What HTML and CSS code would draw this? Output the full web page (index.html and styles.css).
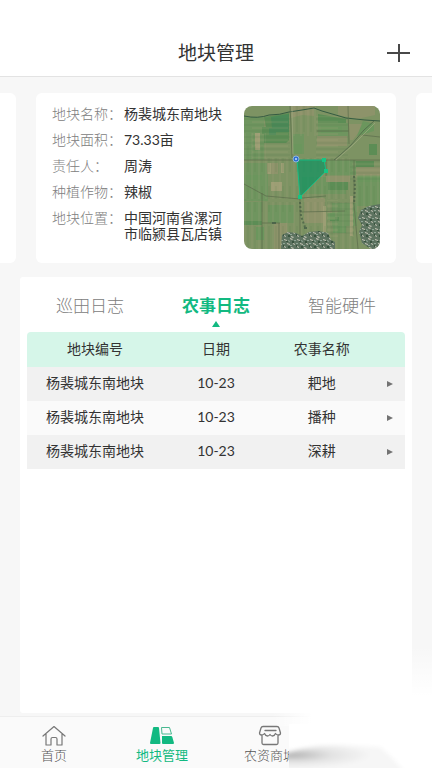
FILE: index.html
```html
<!DOCTYPE html>
<html lang="zh-CN">
<head>
<meta charset="utf-8">
<meta name="viewport" content="width=device-width, initial-scale=1">
<title>地块管理</title>
<link rel="stylesheet" href="styles.css">
</head>
<body>
<header class="topbar">
  <h1 class="topbar-title">地块管理</h1>
  <button class="add" type="button" aria-label="添加">
    <svg width="24" height="20" viewBox="0 0 24 20"><path d="M0 10H23M12 1V19" stroke="#484848" stroke-width="2" fill="none"/></svg>
  </button>
</header>
<main class="content">
  <section class="carousel">
    <div class="card peek"></div>
    <article class="card plot">
      <dl class="facts">
        <dt>地块名称：</dt><dd>杨裴城东南地块</dd>
        <dt>地块面积：</dt><dd>73.33亩</dd>
        <dt>责任人：</dt><dd>周涛</dd>
        <dt>种植作物：</dt><dd>辣椒</dd>
        <dt>地块位置：</dt><dd class="address">中国河南省漯河市临颍县瓦店镇</dd>
      </dl>
      <svg class="map" width="136" height="143" viewBox="0 0 136 143">
        <defs>
          <pattern id="furrow" width="7" height="40" patternUnits="userSpaceOnUse">
            <path d="M1 0V40" stroke="#b3a483" stroke-width="1" opacity=".22"/>
            <path d="M4 0V26" stroke="#4c7146" stroke-width="1" opacity=".2"/>
          </pattern>
          <pattern id="furrow-h" width="50" height="6" patternUnits="userSpaceOnUse">
            <path d="M0 1H50" stroke="#3f6e42" stroke-width="1" opacity=".2"/>
            <path d="M8 4H44" stroke="#b1a37e" stroke-width="1" opacity=".25"/>
          </pattern>
          <pattern id="village" width="13" height="11" patternUnits="userSpaceOnUse">
            <path fill="#5d7360" d="M0 0H13V11H0z"/>
            <path fill="#c5c4b5" d="M1 1l3 1v1l-3-1zM7 0l3 1-1 1-2-1zM4 5l3 1v1l-3-1zM10 5l2 1v1l-2-1zM1 8l2 1v1l-2-1zM8 9l3 1-1 1-2-1z"/>
            <path fill="#8fa596" d="M5 2l2 1v1l-2-1zM0 5h2v1H0zM7 7h2v1H7zM11 2h2v1h-2z"/>
            <path fill="#39543f" d="M3 3h2v1H3zM9 3h2v2H9zM5 8h2v2H5zM0 7h1v2H0z"/>
          </pattern>
        </defs>
        <path fill="#7d9363" d="M0 0H136V143H0z"/>
        <path fill="#6f955f" d="M0 11H20V54H0zM49 28H60V48H49zM74 17H104V30H74zM82 54H112V69H82zM0 57H24V95H0zM24 99H50V117H24zM0 96H18V117H0zM58 71H102V88H58zM112 75H136V100H112zM88 97H113V120H88z"/>
        <path fill="#5c8d55" d="M20 11L45 7V34L42 37H20V28H18V21H22zM74 8L102 13V17H74zM112 55H130V62H112zM84 75H104V84H84zM86 111H95V115H86zM0 115H18V119H0zM125 38H133V49H125z"/>
        <path fill="#4b8957" d="M27 11L45 8V26H32V29H25V22H28z"/>
        <path fill="#8d936a" d="M46 0H70V10L58 9L47 12zM105 18H121L109 34H106zM23 57H34V68H23zM27 76H38V84H27zM60 92H81V117H60zM82 70H106V76H82zM112 61H136V69H112zM30 117H43V143H30zM73 30H103V40H73zM94 0H131V9L113 13L94 9z"/>
        <path fill="#6b965d" d="M49 38H58V48H49zM77 20H98V27H77zM0 69H18V74H0zM84 107H91V114H84zM89 120H102V127H89zM119 15L130 18V25L113 30zM12 121H20V134H12zM113 70H136V76H113z"/>
        <path fill="#9c9e74" d="M27 76H38V85H27zM24 57H27V68H24zM37 57H40V67H37zM11 27H16V44H11zM79 100H82V129H79zM106 90H109V130H106z"/>
        <path fill="url(#furrow)" d="M0 52H106V93H0zM0 96H112V143H0zM46 0H72V30H46zM112 68H136V106H112zM0 27H22V52H0z"/>
        <path fill="url(#furrow-h)" d="M0 11H46V52H0zM72 10H104V52H72zM83 94H110V132H83zM106 54H136V75H106z"/>
        <g fill="none" stroke="#5b6c4b" stroke-opacity=".7">
          <path stroke="#355b42" stroke-opacity="1" d="M0 10Q14 13 25 9Q36 9 45 6L58 4L70 2L78 5L102 12L121 14L136 15"/>
          <path d="M46 0L47 20L48 52M0 54H136M0 78L22 90L56 93M104 0L105 38M56 93V143M18 87V143M110 54L110 98L114 143M58 92L82 90M18 117H36M35 117V143M56 106L101 105M73 25H105M82 54V70M118 29L136 31"/>
          <path stroke="#485e45" d="M130 15L120 24L107 39L96 49L90 54"/>
          <path stroke="#a0aa82" d="M48 0L49 48M131 17L108 40L92 54"/>
          <path stroke="#455b43" stroke-dasharray="2 2" stroke-width="2" d="M56 96L57 110L61 121M110 70L111 80L110 98"/>
          <path stroke="#3d5743" stroke-width="2" d="M28 117H32M60 122H63"/>
        </g>
        <path fill="url(#village)" d="M38 129L44 126L52 127L58 130L65 126L75 125L84 127L87 134L91 136V143H37zM117 104L125 100L136 98V143H127L118 137L115 126L118 119L114 112z"/>
        <path fill="#119361" fill-opacity=".72" stroke="#18bd83" stroke-width="1" d="M53 54L80 54L82 65L56 91z"/>
        <path fill="#15c583" d="M78 52h4v4h-4zM80 63h4v4h-4zM54 89h4v4h-4z"/>
        <circle cx="52" cy="53" r="3" fill="#2c6fd2" stroke="#8eb5dc"/>
        <circle cx="52" cy="53" r="1" fill="#c8dcf6"/>
      </svg>
    </article>
    <div class="card peek"></div>
  </section>
  <section class="panel">
    <nav class="tabs">
      <button class="tab" type="button">巡田日志</button>
      <button class="tab active" type="button">农事日志</button>
      <button class="tab" type="button">智能硬件</button>
    </nav>
    <table class="log">
      <colgroup><col class="col-plot"><col class="col-date"><col class="col-task"><col class="col-more"></colgroup>
      <thead><tr><th>地块编号</th><th>日期</th><th>农事名称</th><th></th></tr></thead>
      <tbody>
        <tr><td>杨裴城东南地块</td><td>10-23</td><td>耙地</td><td><svg width="6" height="8" viewBox="0 0 6 8"><path d="M0 1L6 4L0 7z" fill="#737373"/></svg></td></tr>
        <tr><td>杨裴城东南地块</td><td>10-23</td><td>播种</td><td><svg width="6" height="8" viewBox="0 0 6 8"><path d="M0 1L6 4L0 7z" fill="#737373"/></svg></td></tr>
        <tr><td>杨裴城东南地块</td><td>10-23</td><td>深耕</td><td><svg width="6" height="8" viewBox="0 0 6 8"><path d="M0 1L6 4L0 7z" fill="#737373"/></svg></td></tr>
      </tbody>
    </table>
  </section>
</main>
<nav class="bottom">
  <a class="item" href="#home">
    <svg width="24" height="22" viewBox="0 0 24 22" fill="none" stroke="#777" stroke-width="1.2" stroke-linejoin="round" stroke-linecap="round"><path d="M1 11L12 1.500L23 11M4 9V20H9V14Q9 12.500 10.500 12.500H13.500Q15 12.500 15 14V20H20V9"/></svg>
    <span>首页</span>
  </a>
  <a class="item current" href="#plots">
    <svg width="24" height="22" viewBox="0 0 24 22"><path fill="#12b981" d="M3 3Q3 2 4 2H8Q9 2 9 3L10.500 18Q10.500 19 9.500 19H1Q0 19 0 18zM12 11H21Q22 11 22.300 12L24 18Q24 19 23 19H13Q12 19 12 18z"/><path fill="none" stroke="#49b991" d="M11.500 2.500H19.500L21.500 9H12z"/></svg>
    <span>地块管理</span>
  </a>
  <a class="item" href="#shop">
    <svg width="24" height="22" viewBox="0 0 24 22" fill="none" stroke="#777" stroke-width="1.300" stroke-linejoin="round" stroke-linecap="round"><path d="M5 1.500H19Q20.500 1.500 21 3L22.500 8Q22.500 10 20.500 10Q18.500 10 17.500 8.500Q16.500 11 14.500 11Q13 11 12 9.500Q11 11 9.500 11Q7.500 11 6.500 8.500Q5.500 10 3.500 10Q1.500 10 1.500 8L3 3Q3.500 1.500 5 1.500zM7 5.500H18M4 10.500V18Q4 19.500 5.500 19.500H18.500Q20 19.500 20 18V10.500"/></svg>
    <span>农资商城</span>
  </a>
  <span class="item"></span>
  <svg class="fade" width="160" height="130" viewBox="0 0 160 130" aria-hidden="true">
    <defs>
      <linearGradient id="edge" x1="0" y1="0" x2="1" y2="0"><stop offset="0" stop-color="#fff" stop-opacity="0"/><stop offset=".25" stop-color="#fff"/></linearGradient>
      <linearGradient id="rise" x1="0" y1="0" x2="0" y2="1"><stop offset="0" stop-color="#fff" stop-opacity="0"/><stop offset="1" stop-color="#fff"/></linearGradient>
      <radialGradient id="shade" cx="0" cy="0" r="1" gradientUnits="userSpaceOnUse" gradientTransform="translate(20 117) scale(80 13)"><stop offset="0" stop-color="#b2b2b2"/><stop offset=".5" stop-color="#e2e2e2"/><stop offset="1" stop-color="#f6f6f6"/></radialGradient>
      <filter id="soft"><feGaussianBlur stdDeviation="2"/></filter>
      <clipPath id="cut"><path d="M17 0H160V130H17z"/></clipPath>
    </defs>
    <path fill="url(#rise)" d="M130 8H160V58H130z"/>
    <path fill="#fff" d="M130 57H160V130H130z"/>
    <path fill="url(#edge)" d="M0 74H160V88H0z"/>
    <path fill="#fff" d="M17 86H160V130H17z"/>
    <g clip-path="url(#cut)">
      <path fill="url(#shade)" filter="url(#soft)" d="M10 117Q34 107 70 107L108 109Q122 120 134 136H10z"/>
    </g>
  </svg>
</nav>
</body>
</html>
```
FILE: styles.css
```css
* { box-sizing: border-box; }
body {
  margin: 0;
  min-height: 100vh;
  display: flex;
  flex-direction: column;
  overflow-x: hidden;
  background: #f7f7f7;
  color: #333;
  font-family: Lato, "Noto Sans CJK SC", sans-serif;
  font-size: 14px;
  font-weight: 300;
}
button { border: 0; padding: 0; background: none; font: inherit; color: inherit; }
svg { display: block; }

.topbar {
  display: grid;
  grid-template-columns: 1fr auto 1fr;
  align-items: center;
  padding: 35px 21px 5px;
  border-bottom: 1px solid #e3e3e3;
  background: #fff;
}
.topbar-title { grid-column: 2; margin: 0; font-size: 19px; line-height: 36px; font-weight: 400; }
.add { justify-self: end; }

.content { flex: 1; display: flex; flex-direction: column; }
.carousel { display: flex; gap: 20px; padding: 16px 0 14px; overflow: hidden; }
.card { background: #fff; border-radius: 6px; }
.peek { flex: 0 0 16px; }
.peek:first-child { border-radius: 0 6px 6px 0; }
.peek:last-child { border-radius: 6px 0 0 6px; }
.plot {
  flex: 1;
  display: flex;
  justify-content: space-between;
  align-items: flex-start;
  padding: 12px 16px 14px;
}
.facts {
  display: grid;
  grid-template-columns: 72px 102px;
  row-gap: 8px;
  margin: 0;
  line-height: 18px;
}
.facts dt { color: #808080; white-space: nowrap; }
.facts dd { margin: 0; font-weight: 400; }
.facts .address { line-height: 16px; padding-top: 1px; }
.map { flex: none; margin-top: 1px; border-radius: 8px; }

.panel { flex: 1; margin: 0 20px 3px; padding: 14px 7px; background: #fff; border-radius: 3px; }
.tabs { display: grid; grid-template-columns: 1fr 1fr 1fr; }
.tab { position: relative; height: 41px; padding-bottom: 12px; font-size: 17px; line-height: 28px; color: #808080; }
.tab.active { color: #12b981; font-weight: 700; }
.tab.active::after {
  content: "";
  position: absolute;
  left: 50%;
  bottom: 5px;
  margin-left: -4px;
  border: 4px solid transparent;
  border-top: 0;
  border-bottom: 6px solid #12b981;
}

.log { width: 100%; table-layout: fixed; border-collapse: collapse; text-align: center; }
.col-plot { width: 36%; }
.col-date { width: 28%; }
.col-task { width: 28%; }
.col-more { width: 8%; }
.log th, .log td { height: 34px; padding: 0 0 2px; font-weight: 400; line-height: 20px; }
.log th { height: 35px; background: #d6f6e9; }
.log th:first-child { border-radius: 4px 0 0 0; }
.log th:last-child { border-radius: 0 4px 0 0; }
.log tbody tr { background: #fafafa; }
.log tbody tr:nth-child(odd) { background: #f1f1f1; }
.log td:last-child { padding: 0; }
.log td svg { margin: 0 auto; }

.bottom {
  position: relative;
  display: grid;
  grid-template-columns: repeat(4, 1fr);
  padding: 8px 0 5px;
  border-top: 1px solid #eee;
  background: #fafafa;
}
.item {
  display: flex;
  flex-direction: column;
  align-items: center;
  color: #555;
  font-size: 13px;
  line-height: 16px;
  text-decoration: none;
  white-space: nowrap;
}
.item.current { color: #12b981; font-weight: 400; }
.fade { position: absolute; right: 0; bottom: 0; pointer-events: none; }
```
